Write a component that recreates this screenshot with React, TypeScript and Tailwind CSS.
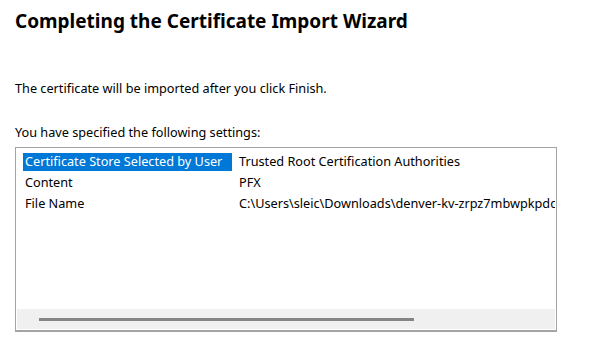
export default function App() {
  const rows = [
    { name: "Certificate Store Selected by User", value: "Trusted Root Certification Authorities" },
    { name: "Content", value: "PFX" },
    { name: "File Name", value: "C:\\Users\\sleic\\Downloads\\denver-kv-zrpz7mbwpkpdc" },
  ];

  return (
    <div className="w-[589px] h-[358px] bg-white px-[15px] pt-[9px] text-black font-['Noto_Sans',sans-serif] overflow-hidden">
      <h1 className="text-[19px] leading-[24px] font-bold">
        Completing the Certificate Import Wizard
      </h1>
      <p className="mt-[47px] text-[12.7px] leading-[16px]">
        The certificate will be imported after you click Finish.
      </p>
      <p className="mt-[28px] text-[12.7px] leading-[16px]">
        You have specified the following settings:
      </p>
      <div className="mt-[7px] w-[542px] h-[185px] border border-[#a3a3a3] border-b-2 flex flex-col p-px">
        <div className="flex-1 pt-[2px] text-[12.7px]">
          {rows.map((row, i) => (
            <div key={row.name} className="h-[21px] flex items-center whitespace-nowrap overflow-hidden">
              <div className="w-[221px] shrink-0 pl-[6px]">
                <span
                  className={
                    i === 0
                      ? "flex items-center h-[18px] w-[209px] pl-[2px] bg-[#0078d7] text-white"
                      : "flex items-center h-[18px] w-[209px] pl-[2px]"
                  }
                >
                  {row.name}
                </span>
              </div>
              <span className="pl-px">{row.value}</span>
            </div>
          ))}
        </div>
        <div className="h-[20px] bg-[#f0f0f0] flex items-center pl-[22px]">
          <div className="w-[375px] h-[3px] bg-[#858585]" />
        </div>
      </div>
    </div>
  );
}
